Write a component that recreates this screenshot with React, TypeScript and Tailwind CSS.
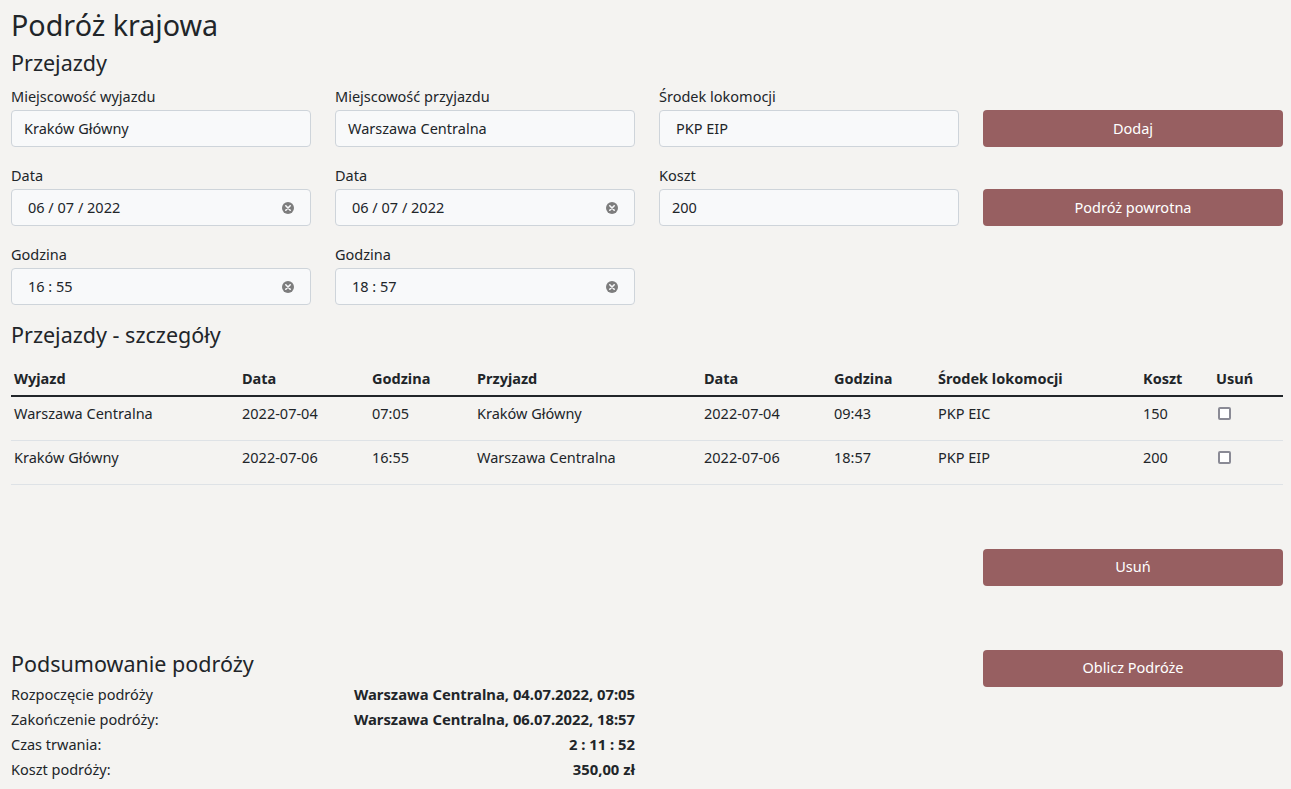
import React from "react";

const font = { fontFamily: '"Noto Sans", "Open Sans", sans-serif' };

function ClearIcon() {
  return (
    <svg width="12" height="12" viewBox="0 0 12 12" className="shrink-0">
      <circle cx="6" cy="6" r="6" fill="#7d7d7d" />
      <path d="M3.8 3.8 L8.2 8.2 M8.2 3.8 L3.8 8.2" stroke="#f8f9fa" strokeWidth="1.6" strokeLinecap="round" />
    </svg>
  );
}

function Field({ label, value, clear, pad = "pl-3" }: { label: string; value: string; clear?: boolean; pad?: string }) {
  return (
    <div className="flex flex-col">
      <label className="text-[14.5px] leading-[22px] text-[#212529] mb-[3px] h-[22px]">{label}</label>
      <div className={`h-[37px] rounded-[4px] border border-[#ced4da] bg-[#f8f9fa] flex items-center justify-between ${pad} pr-4 text-[14.5px] text-[#212529]`}>
        <span>{value}</span>
        {clear && <ClearIcon />}
      </div>
    </div>
  );
}

function Btn({ children }: { children: React.ReactNode }) {
  return (
    <button className="h-[37px] w-full rounded-[4px] bg-[#975f61] text-[14.5px] text-white">{children}</button>
  );
}

const rows = [
  ["Warszawa Centralna", "2022-07-04", "07:05", "Kraków Główny", "2022-07-04", "09:43", "PKP EIC", "150"],
  ["Kraków Główny", "2022-07-06", "16:55", "Warszawa Centralna", "2022-07-06", "18:57", "PKP EIP", "200"],
];

const headers = ["Wyjazd", "Data", "Godzina", "Przyjazd", "Data", "Godzina", "Środek lokomocji", "Koszt", "Usuń"];
const widths = ["w-[228px]", "w-[130px]", "w-[105px]", "w-[227px]", "w-[130px]", "w-[104px]", "w-[205px]", "w-[73px]", ""];

export default function App() {
  return (
    <div className="min-h-screen bg-[#f4f3f1] text-[#212529] pl-[11px] pr-[8px]" style={font}>
      <h1 className="text-[28.7px] leading-[36px] pt-[7px] font-normal">Podróż krajowa</h1>
      <h2 className="text-[21.5px] leading-[28px] mt-[6px] font-normal">Przejazdy</h2>

      <div className="grid grid-cols-[300px_300px_300px_300px] gap-x-[24px] gap-y-[17px] mt-[8px]">
        <Field label="Miejscowość wyjazdu" value="Kraków Główny" />
        <Field label="Miejscowość przyjazdu" value="Warszawa Centralna" />
        <Field label="Środek lokomocji" value="PKP EIP" pad="pl-4" />
        <div className="pt-[25px]"><Btn>Dodaj</Btn></div>

        <Field label="Data" value="06 / 07 / 2022" clear pad="pl-4" />
        <Field label="Data" value="06 / 07 / 2022" clear pad="pl-4" />
        <Field label="Koszt" value="200" pad="pl-3" />
        <div className="pt-[25px]"><Btn>Podróż powrotna</Btn></div>

        <Field label="Godzina" value="16 : 55" clear pad="pl-4" />
        <Field label="Godzina" value="18 : 57" clear pad="pl-4" />
      </div>

      <h2 className="text-[21.5px] leading-[28px] mt-[16px] font-normal">Przejazdy - szczegóły</h2>

      <table className="w-[1272px] mt-[14px] text-[14.5px] border-collapse">
        <thead>
          <tr className="border-b-2 border-[#212529]">
            {headers.map((h, i) => (
              <th key={i} className={`text-left font-bold pl-[3px] h-[33px] align-middle ${widths[i]}`}>{h}</th>
            ))}
          </tr>
        </thead>
        <tbody>
          {rows.map((r, i) => (
            <tr key={i} className="border-b border-[#dee2e6]">
              {r.map((c, j) => (
                <td key={j} className="pl-[3px] h-[44px] align-top pt-[6px]">{c}</td>
              ))}
              <td className="pl-[5px] align-top pt-[10px]">
                <div className="w-[13px] h-[13px] border-2 border-[#8a8a95] rounded-[2px] bg-white" />
              </td>
            </tr>
          ))}
        </tbody>
      </table>

      <div className="flex justify-end mt-[64px]">
        <div className="w-[300px]"><Btn>Usuń</Btn></div>
      </div>

      <div className="flex mt-[64px]">
        <div className="w-[624px]">
          <h2 className="text-[21.5px] leading-[28px] font-normal">Podsumowanie podróży</h2>
          <div className="mt-[4px] text-[14.5px]">
            {[
              ["Rozpoczęcie podróży", "Warszawa Centralna, 04.07.2022, 07:05"],
              ["Zakończenie podróży:", "Warszawa Centralna, 06.07.2022, 18:57"],
              ["Czas trwania:", "2 : 11 : 52"],
              ["Koszt podróży:", "350,00 zł"],
            ].map(([a, b]) => (
              <div key={a} className="flex justify-between h-[25px] leading-[25px]">
                <span>{a}</span>
                <span className="font-bold text-[14.8px]">{b}</span>
              </div>
            ))}
          </div>
        </div>
        <div className="ml-auto w-[300px]">
          <Btn>Oblicz Podróże</Btn>
        </div>
      </div>
    </div>
  );
}
